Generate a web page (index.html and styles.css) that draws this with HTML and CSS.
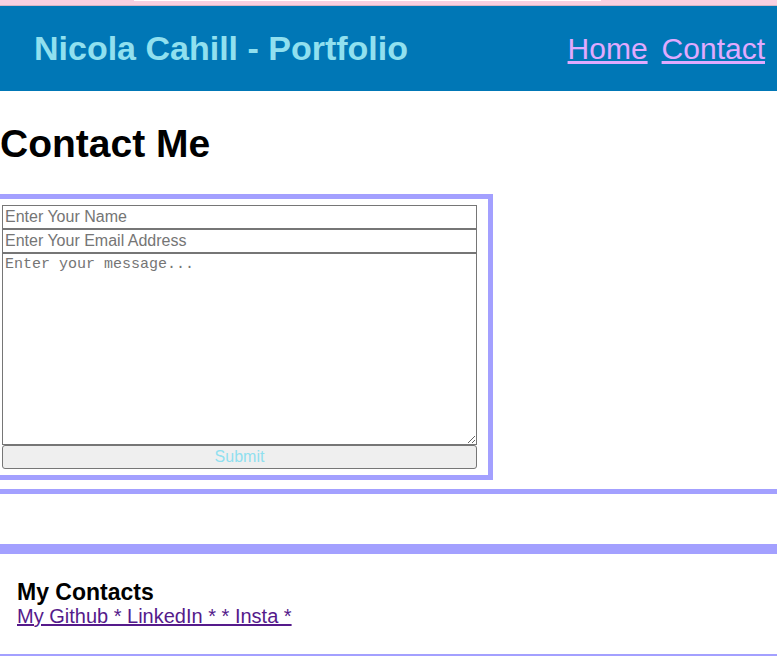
FILE: index.html
```html
<!DOCTYPE html>
<html lang="en">
<head>
<meta charset="utf-8">
<title>Nicola Cahill - Contact</title>
<link rel="stylesheet" href="styles.css">
</head>
<body>
<div class="topbar"><div class="topbar-sheen"></div></div>
<header class="site-header">
  <h2 class="site-title">Nicola Cahill - Portfolio</h2>
  <nav class="site-nav">
    <a href="#" class="nav-link">Home</a>
    <a href="#" class="nav-link">Contact</a>
  </nav>
</header>
<main class="contact">
  <h1 class="contact-title">Contact Me</h1>
  <form class="contact-form">
    <input class="field" type="text" placeholder="Enter Your Name">
    <input class="field" type="email" placeholder="Enter Your Email Address">
    <textarea class="message" placeholder="Enter your message..."></textarea>
    <button class="submit" type="button">Submit</button>
  </form>
</main>
<footer class="site-footer">
  <h3 class="footer-title">My Contacts</h3>
  <a href="#" class="footer-links">My Github * LinkedIn * * Insta *</a>
</footer>
</body>
</html>
```

FILE: styles.css
```css
html, body {
  margin: 0;
  padding: 0;
  background: #ffffff;
  font-family: "Liberation Sans", Arial, sans-serif;
  overflow: hidden;
}

.topbar {
  height: 5px;
  background: #f7d0e1;
  border-bottom: 1px solid #d8b5c4;
}

.topbar-sheen {
  margin-left: 134px;
  width: 467px;
  height: 1px;
  background: #ffffff;
}

.site-header {
  height: 85px;
  background: #0077b6;
  display: flex;
  align-items: center;
  justify-content: space-between;
  padding: 0 12px 0 34px;
}

.site-title {
  margin: 0;
  font-size: 34px;
  font-weight: bold;
  color: #90e0ef;
}

.site-nav {
  display: flex;
  gap: 14px;
}

.nav-link {
  font-size: 30px;
  color: #e0aaff;
  text-decoration: underline;
}

.contact {
  border-bottom: 5px solid #a3a0ff;
  padding-bottom: 9px;
}

.contact-title {
  margin: 30px 0 28px 0;
  font-size: 39px;
  line-height: 45px;
  font-weight: bold;
  color: #000000;
}

.contact-form {
  width: 475px;
  margin-left: -9px;
  padding: 6px 11px 6px 6px;
  border: 5px solid #a3a0ff;
  display: flex;
  flex-direction: column;
}

.field {
  display: block;
  box-sizing: border-box;
  width: 475px;
  height: 24px;
  margin: 0;
  padding: 1px 2px;
  border: 1px solid #767676;
  font-family: "Liberation Sans", Arial, sans-serif;
  font-size: 16px;
  color: #000;
  background: #fff;
}

.field::placeholder {
  color: #757575;
}

.message {
  display: block;
  box-sizing: border-box;
  width: 475px;
  height: 192px;
  margin: 0;
  padding: 2px;
  border: 1px solid #767676;
  font-family: "Liberation Mono", "DejaVu Sans Mono", monospace;
  font-size: 15px;
  line-height: 18px;
}

.message::placeholder {
  color: #757575;
}

.submit {
  display: block;
  box-sizing: border-box;
  width: 475px;
  height: 24px;
  margin: 0;
  padding: 0;
  border: 1px solid #767676;
  border-radius: 3px;
  background: #efefef;
  color: #90e0ef;
  font-family: "Liberation Sans", Arial, sans-serif;
  font-size: 16px;
}

.site-footer {
  margin-top: 50px;
  border-top: 10px solid #a3a0ff;
  border-bottom: 5px solid #a3a0ff;
  padding: 25px 17px 26px;
}

.footer-title {
  margin: 0;
  font-size: 23px;
  line-height: 26px;
  font-weight: bold;
  color: #000;
}

.footer-links {
  display: inline-block;
  font-size: 20px;
  line-height: 23px;
  color: #551a8b;
  text-decoration: underline;
}
```
